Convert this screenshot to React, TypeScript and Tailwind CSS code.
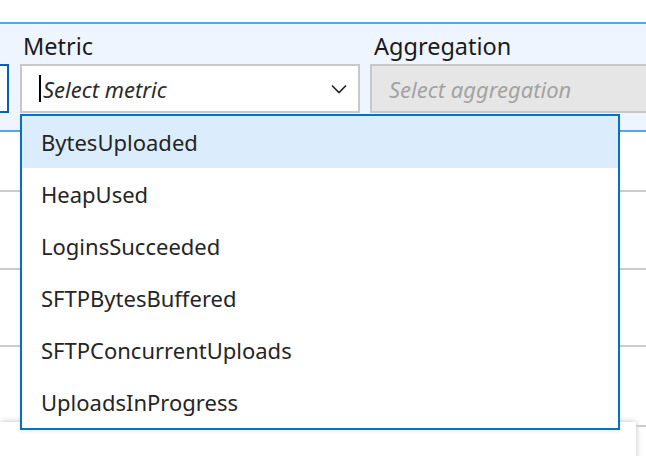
import React from "react";

const items = [
  "BytesUploaded",
  "HeapUsed",
  "LoginsSucceeded",
  "SFTPBytesBuffered",
  "SFTPConcurrentUploads",
  "UploadsInProgress",
];

export default function App() {
  return (
    <div
      className="relative w-[646px] h-[456px] overflow-hidden bg-white text-[#212121]"
      style={{ fontFamily: '"Noto Sans", "Open Sans", sans-serif' }}
    >
      <div className="h-[22px]" />
      {/* filter panel */}
      <div className="h-[110px] border-t-2 border-b-2 border-[#5ba5e5] bg-[#eef5fe] flex">
        <div className="w-[20px] shrink-0 pt-[40px]">
          <div className="h-[49px] w-[20px] -ml-[11px] border-2 border-[#0063b1] bg-white" />
        </div>
        <div className="w-[340px] shrink-0 flex flex-col">
          <div className="h-[40px] pl-[3px] pt-[6px] text-[23.5px] leading-[32px] text-[#1b1b1b]">Metric</div>
          <div className="h-[49px] border-2 border-[#c8c8c8] bg-white flex items-center pl-[17px] pr-[10px]">
            <div className="w-[2px] h-[27px] bg-black mr-[2px]" />
            <span className="italic text-[22px] leading-[30px] text-[#2b2b2b] flex-1">Select metric</span>
            <svg width="16" height="10" viewBox="0 0 16 10" className="mr-[1px]">
              <polyline points="1,1.5 8,8.5 15,1.5" fill="none" stroke="#222" strokeWidth="1.6" />
            </svg>
          </div>
        </div>
        <div className="w-[10px] shrink-0" />
        <div className="flex-1 flex flex-col">
          <div className="h-[40px] pl-[4px] pt-[6px] text-[23.5px] leading-[32px] text-[#1b1b1b]">Aggregation</div>
          <div className="h-[49px] -mr-[4px] border-2 border-[#c8c8c8] bg-[#e6e6e6] flex items-center pl-[17px]">
            <span className="italic text-[22px] leading-[30px] text-[#a3a3a3] whitespace-nowrap">Select aggregation</span>
          </div>
        </div>
      </div>
      {/* rows behind */}
      <div className="h-[60px] border-b-2 border-[#cccccc]" />
      <div className="h-[78px] border-b-2 border-[#cccccc]" />
      <div className="h-[77px] border-b-2 border-[#cccccc]" />
      <div className="h-[75px]" />
      <div className="flex">
        <div className="w-[636px] h-[40px] bg-white shadow-[0_0_6px_rgba(0,0,0,0.25)] pl-[104px] pt-[26px]">
          <div className="text-[22px] leading-[30px] text-[#333] whitespace-nowrap">Select a metric to add it to the chart above</div>
        </div>
        <div className="flex-1 mt-[3px] border-t-2 border-[#cccccc]" />
      </div>

      {/* dropdown menu */}
      <div className="absolute left-[20px] top-[114px] w-[600px] h-[316px] border-2 border-[#0072c6] bg-white shadow-[0_2px_3px_rgba(0,0,0,0.08)]">
        {items.map((it, i) => (
          <div
            key={it}
            className={
              "h-[52px] pl-[19px] flex items-center text-[22px] leading-[30px] text-[#252525] " +
              (i === 0 ? "bg-[#dbedfd]" : "")
            }
          >
            {it}
          </div>
        ))}
      </div>
    </div>
  );
}
